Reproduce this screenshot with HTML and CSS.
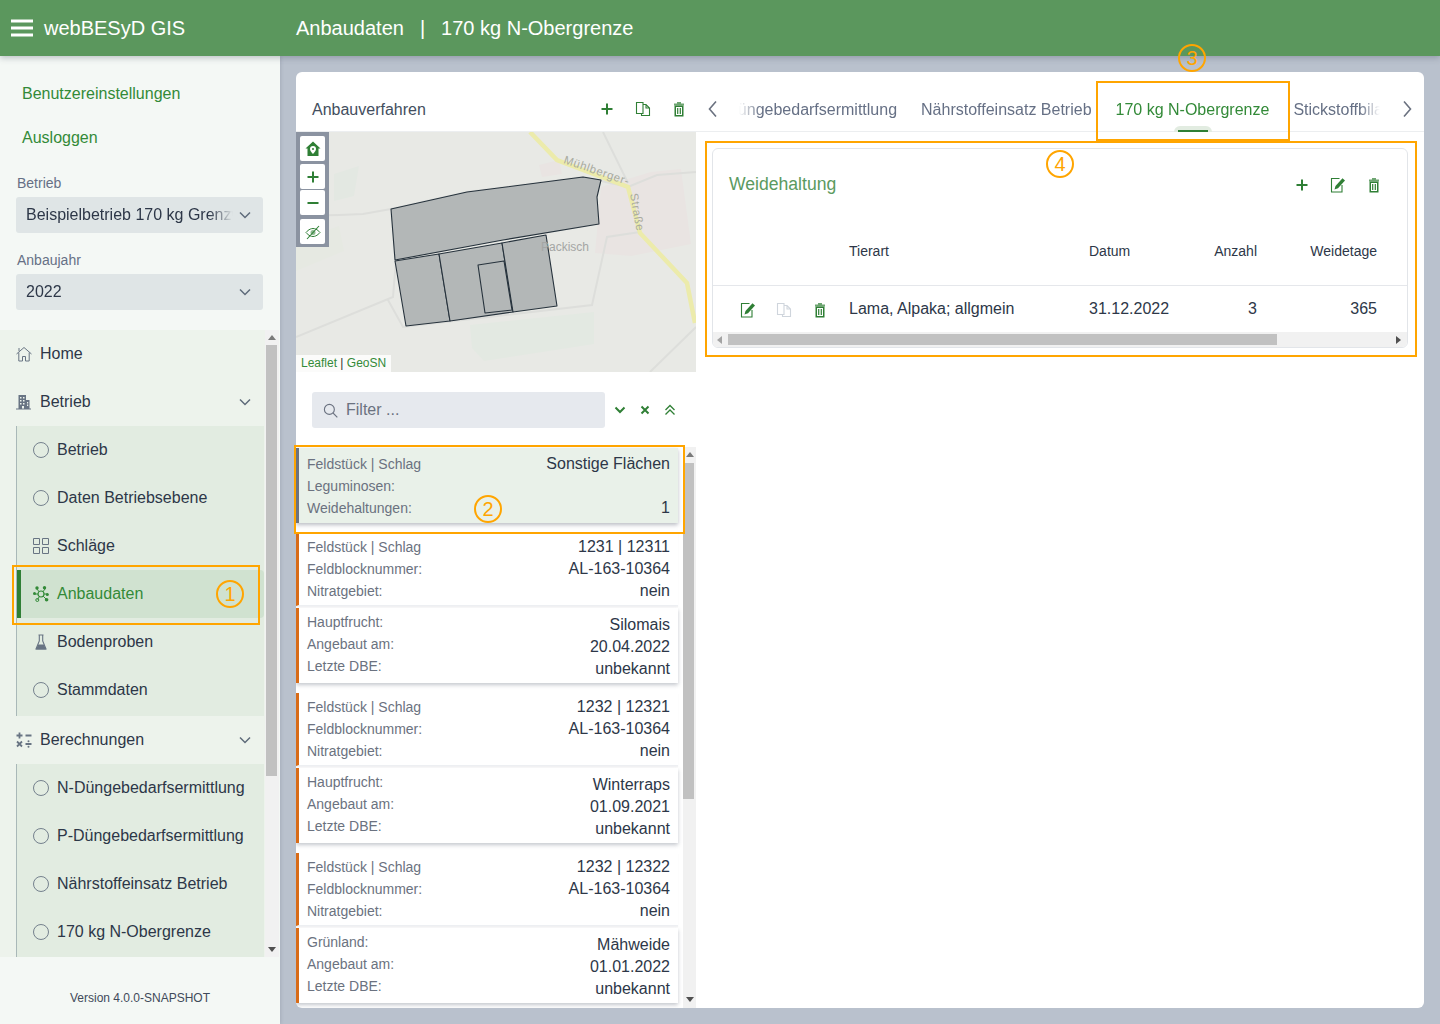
FILE: index.html
```html
<!DOCTYPE html>
<html lang="de">
<head>
<meta charset="utf-8">
<title>webBESyD GIS</title>
<link rel="stylesheet" href="styles.css">
</head>
<body>
<svg class="defs" width="0" height="0" aria-hidden="true">
  <symbol id="i-plus" viewBox="0 0 16 16"><path d="M8 2.500v11M2.500 8h11" fill="none" stroke="currentColor" stroke-width="2"/></symbol>
  <symbol id="i-copy" viewBox="0 0 16 16"><path d="M1.500 1.500h6.500v11h-6.500zM8 3.500h3l3.500 3.500v7.500h-8v-2M11 3.500V7h3.500" fill="none" stroke="currentColor" stroke-width="1.100"/></symbol>
  <symbol id="i-trash" viewBox="0 0 16 16"><path d="M6 1h4v1.500h3v2H3v-2h3z" fill="currentColor" opacity=".7"/><path d="M4.250 5.250h7.500v9.500h-7.500z" fill="none" stroke="currentColor" stroke-width="1.500"/><path d="M6.700 7v6M9.300 7v6" stroke="currentColor" stroke-width="1.200"/></symbol>
  <symbol id="i-edit" viewBox="0 0 16 16"><path d="M9.500 1.500H1.500v13.500h10.500V8" fill="none" stroke="currentColor" stroke-width="1.100"/><path d="M4.500 12.500l1-3.500 7-7.700 2.500 2.200-7 7.700z" fill="currentColor"/></symbol>
  <symbol id="i-chev" viewBox="0 0 16 16"><path d="M3 5.500l5 5 5-5" fill="none" stroke="currentColor" stroke-width="1.500"/></symbol>
  <symbol id="i-circle" viewBox="0 0 16 16"><circle cx="8" cy="8" r="7.500" fill="none" stroke="currentColor" stroke-width=".9"/></symbol>
</svg>

<header class="topbar">
  <svg class="burger" width="22" height="18" viewBox="0 0 22 18"><path d="M0 2h22M0 9h22M0 16h22" stroke="#fff" stroke-width="3"/></svg>
  <span class="brand">webBESyD GIS</span>
  <span class="crumb">Anbaudaten</span>
  <span class="crumb-sep">|</span>
  <span class="crumb">170 kg N-Obergrenze</span>
</header>

<div class="shell">
  <aside class="sidebar">
    <div class="side-top">
      <a class="side-link">Benutzereinstellungen</a>
      <a class="side-link">Ausloggen</a>
      <label class="sel-label sel-label-first">Betrieb</label>
      <div class="select"><span class="select-text">Beispielbetrieb 170 kg Grenzwert</span><svg class="select-chev"><use href="#i-chev"/></svg></div>
      <label class="sel-label">Anbaujahr</label>
      <div class="select"><span class="select-text">2022</span><svg class="select-chev"><use href="#i-chev"/></svg></div>
    </div>
    <div class="nav-wrap">
      <nav class="nav">
        <div class="nav-item"><svg class="nav-ic" viewBox="0 0 16 16"><path d="M.5 8L8 1.500 15.500 8M2.800 6.500v8.500h3.700v-4.500h3V15h3.700V6.500M3 2v3" fill="none" stroke="currentColor" stroke-width="1"/></svg>Home</div>
        <div class="nav-item"><svg class="nav-ic" viewBox="0 0 16 16"><path fill-rule="evenodd" fill="currentColor" d="M2.500 1H10v5h3.500v8.500H15v1H0v-1h2.500zM4 3v1.500h1.500V3zM7 3v1.500h1.500V3zM4 6v1.500h1.500V6zM7 6v1.500h1.500V6zM4 9v1.500h1.500V9zM7 9v1.500h1.500V9zM11 8v1.500h1.200V8zM11 10.500V12h1.200v-1.500zM6 12v2.500h2V12z"/></svg>Betrieb<svg class="nav-chev"><use href="#i-chev"/></svg></div>
        <div class="sub">
          <div class="sub-item"><svg class="sub-ic"><use href="#i-circle"/></svg>Betrieb</div>
          <div class="sub-item"><svg class="sub-ic"><use href="#i-circle"/></svg>Daten Betriebsebene</div>
          <div class="sub-item"><svg class="sub-ic" viewBox="0 0 16 16"><path d="M.5.500h6v6h-6zM9.500.500h6v6h-6zM.5 9.500h6v6h-6zM9.500 9.500h6v6h-6z" fill="none" stroke="currentColor"/></svg>Schläge</div>
          <div class="sub-item sub-active"><svg class="sub-ic" viewBox="0 0 16 16"><path d="M8 8L3.500 2.500M8 8l4.500-5.500M8 8H2M8 8h6.500M8 8l-3.500 5.500M8 8l5 5" stroke="currentColor" stroke-width="1"/><circle cx="8" cy="8" r="3" fill="#d0e2d0" stroke="currentColor" stroke-width="1.200"/><circle cx="4" cy="2" r="1.700" fill="currentColor"/><circle cx="11.500" cy="1.800" r="1.700" fill="currentColor"/><circle cx="1.500" cy="7.500" r="1.500" fill="currentColor"/><circle cx="14.300" cy="8.500" r="1.500" fill="currentColor"/><circle cx="4.300" cy="14" r="1.500" fill="none" stroke="currentColor"/><circle cx="13.600" cy="13.800" r="1.800" fill="currentColor"/></svg>Anbaudaten</div>
          <div class="sub-item"><svg class="sub-ic" viewBox="0 0 16 16"><path d="M5.500 1h5M6.300 1v6L3 15h10L9.700 7V1" fill="none" stroke="currentColor" stroke-width="1.100"/><path d="M5 10.500h6L13 15.500H3z" fill="currentColor"/></svg>Bodenproben</div>
          <div class="sub-item"><svg class="sub-ic"><use href="#i-circle"/></svg>Stammdaten</div>
        </div>
        <div class="nav-item"><svg class="nav-ic" viewBox="0 0 16 16"><path d="M3.500.5v6M.5 3.500h6M9.500 3.500h6M1 9.500l5 5M6 9.500l-5 5M9.500 12h6" fill="none" stroke="currentColor" stroke-width="1.800"/><circle cx="12.500" cy="9.300" r="1" fill="currentColor"/><circle cx="12.500" cy="14.700" r="1" fill="currentColor"/></svg>Berechnungen<svg class="nav-chev"><use href="#i-chev"/></svg></div>
        <div class="sub sub-long">
          <div class="sub-item"><svg class="sub-ic"><use href="#i-circle"/></svg>N-Düngebedarfsermittlung</div>
          <div class="sub-item"><svg class="sub-ic"><use href="#i-circle"/></svg>P-Düngebedarfsermittlung</div>
          <div class="sub-item"><svg class="sub-ic"><use href="#i-circle"/></svg>Nährstoffeinsatz Betrieb</div>
          <div class="sub-item"><svg class="sub-ic"><use href="#i-circle"/></svg>170 kg N-Obergrenze</div>
        </div>
      </nav>
      <div class="vbar vbar-nav">
        <div class="arrow arrow-up"></div>
        <div class="vtrack"><div class="vthumb vthumb-nav"></div></div>
        <div class="arrow arrow-down"></div>
      </div>
    </div>
    <footer class="version">Version 4.0.0-SNAPSHOT</footer>
  </aside>

  <main class="content">
    <section class="card">
      <div class="left">
        <div class="left-head">
          <span class="left-title">Anbauverfahren</span>
          <div class="icon-group">
            <svg class="ic"><use href="#i-plus"/></svg>
            <svg class="ic"><use href="#i-copy"/></svg>
            <svg class="ic"><use href="#i-trash"/></svg>
          </div>
        </div>
        <div class="map">
          <svg class="map-svg" viewBox="0 0 400 240">
            <rect width="400" height="240" fill="#e8e9e5"/>
            <path d="M38 42l25-8-5 30-20 5z" fill="#e3e8e2"/>
            <path d="M243 33l20-5 3 14-20 3zM305 55l50-15 30-3 10 75-60 12-36-3z" fill="#e9e4e2"/>
            <path d="M174 193l124-13v32l-110 17-12-13z" fill="#e3e9e2"/>
            <path d="M0 110l43-16 5 25-48 20z" fill="#e6e9e2"/>
            <g fill="none" stroke="#dddedb" stroke-width="2">
              <path d="M0 84l43-1 24-1 28-5 76-17 116-15 45 10 29-12 39-3"/>
              <path d="M0 205l97-40 3-37M92 168l15 27 189-22 15-68 33-5"/>
              <path d="M307 0l25 51M354 240l46-45"/>
            </g>
            <path d="M234 0l27 28 71 27 12 46 47 50 8 40" fill="none" stroke="#ecebab" stroke-width="4.500"/>
            <g fill="#b3b7b7" stroke="#26323c" stroke-width="1.100" stroke-linejoin="round">
              <path d="M95 77l76-17 116-15 18 3-4 17 2 27-96 16-108 20z"/>
              <path d="M99 129l44-7 11 67-44 5z"/>
              <path d="M143 122l63-11 11 69-63 9z"/>
              <path d="M206 111l44-8 11 71-44 6z"/>
              <path d="M182 133l26-4 8 49-27 3z"/>
            </g>
            <text class="map-road" transform="translate(267 31) rotate(19)">Mühlberger-</text>
            <text class="map-road" transform="translate(334 62) rotate(80)">Straße</text>
            <text class="map-place" x="245" y="119">Packisch</text>
          </svg>
          <div class="map-ctrl">
            <div class="map-btn"><svg class="map-ic" viewBox="0 0 16 16"><path fill-rule="evenodd" fill="currentColor" d="M8 .5l7.500 7H13.500v7.500h-11V7.500H.5zM8 5a3 3 0 0 0-3 3c0 2 3 5 3 5s3-3 3-5a3 3 0 0 0-3-3zm0 2a1 1 0 1 1 0 2 1 1 0 0 1 0-2z"/></svg></div>
            <div class="map-btn map-btn-gap"><svg class="map-ic"><use href="#i-plus"/></svg></div>
            <div class="map-btn"><svg class="map-ic" viewBox="0 0 16 16"><path d="M2.500 8h11" stroke="currentColor" stroke-width="2"/></svg></div>
            <div class="map-btn map-btn-last"><svg class="map-ic" viewBox="0 0 16 16"><path d="M1 8.500s3-4 7-4 7 4 7 4-3 4-7 4-7-4-7-4z" fill="none" stroke="currentColor" stroke-width="1"/><circle cx="8" cy="8.500" r="2.500" fill="currentColor" opacity=".55"/><path d="M2 15L14 2" stroke="currentColor" stroke-width="1.100"/></svg></div>
          </div>
          <div class="map-attr"><span class="attr-link">Leaflet</span> | <span class="attr-link">GeoSN</span></div>
        </div>
        <div class="filter">
          <div class="filter-input">
            <svg class="search-ic" viewBox="0 0 16 16"><circle cx="6.800" cy="6.800" r="5.300" fill="none" stroke="currentColor" stroke-width="1.200"/><path d="M10.800 10.800l4.500 4.500" stroke="currentColor" stroke-width="1.300"/></svg>
            <span>Filter ...</span>
          </div>
          <svg class="fic" viewBox="0 0 12 12"><path d="M1.500 3.500L6 8l4.500-4.500" fill="none" stroke="currentColor" stroke-width="2"/></svg>
          <svg class="fic" viewBox="0 0 12 12"><path d="M2.500 2.500l7 7M9.500 2.500l-7 7" stroke="currentColor" stroke-width="2"/></svg>
          <svg class="fic" viewBox="0 0 12 12"><path d="M1.500 6L6 1.500 10.500 6M1.500 10.500L6 6l4.500 4.500" fill="none" stroke="currentColor" stroke-width="1.300"/></svg>
        </div>
        <div class="list-wrap">
          <div class="list">
            <div class="block block-selected">
              <div class="row"><span class="lab">Feldstück | Schlag</span><span class="val">Sonstige Flächen</span></div>
              <div class="row"><span class="lab">Leguminosen:</span></div>
              <div class="row"><span class="lab">Weidehaltungen:</span><span class="val">1</span></div>
            </div>
            <div class="group">
              <div class="block block-top">
                <div class="row"><span class="lab">Feldstück | Schlag</span><span class="val">1231 | 12311</span></div>
                <div class="row"><span class="lab">Feldblocknummer:</span><span class="val">AL-163-10364</span></div>
                <div class="row"><span class="lab">Nitratgebiet:</span><span class="val">nein</span></div>
              </div>
              <div class="block block-bottom">
                <div class="row"><span class="lab">Hauptfrucht:</span><span class="val">Silomais</span></div>
                <div class="row"><span class="lab">Angebaut am:</span><span class="val">20.04.2022</span></div>
                <div class="row"><span class="lab">Letzte DBE:</span><span class="val">unbekannt</span></div>
              </div>
            </div>
            <div class="group">
              <div class="block block-top">
                <div class="row"><span class="lab">Feldstück | Schlag</span><span class="val">1232 | 12321</span></div>
                <div class="row"><span class="lab">Feldblocknummer:</span><span class="val">AL-163-10364</span></div>
                <div class="row"><span class="lab">Nitratgebiet:</span><span class="val">nein</span></div>
              </div>
              <div class="block block-bottom">
                <div class="row"><span class="lab">Hauptfrucht:</span><span class="val">Winterraps</span></div>
                <div class="row"><span class="lab">Angebaut am:</span><span class="val">01.09.2021</span></div>
                <div class="row"><span class="lab">Letzte DBE:</span><span class="val">unbekannt</span></div>
              </div>
            </div>
            <div class="group">
              <div class="block block-top">
                <div class="row"><span class="lab">Feldstück | Schlag</span><span class="val">1232 | 12322</span></div>
                <div class="row"><span class="lab">Feldblocknummer:</span><span class="val">AL-163-10364</span></div>
                <div class="row"><span class="lab">Nitratgebiet:</span><span class="val">nein</span></div>
              </div>
              <div class="block block-bottom">
                <div class="row"><span class="lab">Grünland:</span><span class="val">Mähweide</span></div>
                <div class="row"><span class="lab">Angebaut am:</span><span class="val">01.01.2022</span></div>
                <div class="row"><span class="lab">Letzte DBE:</span><span class="val">unbekannt</span></div>
              </div>
            </div>
          </div>
          <div class="vbar vbar-list">
            <div class="arrow arrow-up"></div>
            <div class="vtrack"><div class="vthumb vthumb-list"></div></div>
            <div class="arrow arrow-down"></div>
          </div>
        </div>
      </div>

      <div class="right">
        <div class="tabs">
          <svg class="tab-arrow" viewBox="0 0 16 16"><path d="M11 .5L4.500 8l6.500 7.500" fill="none" stroke="currentColor" stroke-width="1.600"/></svg>
          <div class="tab-view">
            <div class="tab-strip">
              <span class="tab">N-Düngebedarfsermittlung</span>
              <span class="tab">Nährstoffeinsatz Betrieb</span>
              <span class="tab tab-active">170 kg N-Obergrenze</span>
              <span class="tab">Stickstoffbilanz</span>
            </div>
          </div>
          <svg class="tab-arrow" viewBox="0 0 16 16"><path d="M5 .5L11.500 8 5 15.500" fill="none" stroke="currentColor" stroke-width="1.600"/></svg>
        </div>
        <div class="right-body">
          <div class="panel">
            <div class="panel-head">
              <span class="panel-title">Weidehaltung</span>
              <div class="icon-group">
                <svg class="ic"><use href="#i-plus"/></svg>
                <svg class="ic"><use href="#i-edit"/></svg>
                <svg class="ic"><use href="#i-trash"/></svg>
              </div>
            </div>
            <div class="table-wrap">
              <table class="table">
                <colgroup><col class="c-act"><col class="c-art"><col class="c-dat"><col class="c-anz"><col class="c-wei"><col class="c-rest"></colgroup>
                <thead><tr><th></th><th>Tierart</th><th>Datum</th><th class="num">Anzahl</th><th class="num">Weidetage</th><th></th></tr></thead>
                <tbody><tr>
                  <td class="acts"><svg class="ic"><use href="#i-edit"/></svg><svg class="ic ic-off"><use href="#i-copy"/></svg><svg class="ic"><use href="#i-trash"/></svg></td>
                  <td>Lama, Alpaka; allgmein</td><td>31.12.2022</td><td class="num">3</td><td class="num">365</td><td></td>
                </tr></tbody>
              </table>
            </div>
            <div class="hbar">
              <div class="arrow arrow-left"></div>
              <div class="hthumb"></div>
              <div class="arrow arrow-right"></div>
            </div>
          </div>
        </div>
      </div>
    </section>
  </main>
</div>

<div class="mark mark-1"></div><div class="badge badge-1">1</div>
<div class="mark mark-2"></div><div class="badge badge-2">2</div>
<div class="mark mark-3"></div><div class="badge badge-3">3</div>
<div class="mark mark-4"></div><div class="badge badge-4">4</div>
</body>
</html>
```
FILE: styles.css
```css
* { box-sizing: border-box; }
html, body { margin: 0; height: 100%; }
body {
  width: 1440px; height: 1024px; overflow: hidden; position: relative;
  font-family: "Liberation Sans", Arial, sans-serif; font-size: 16px; color: #2d3748;
  background: #b9c1cd;
  display: flex; flex-direction: column;
}
.defs { position: absolute; }

.topbar {
  height: 56px; flex: none; background: #5b975d; color: #fff; position: relative; z-index: 5;
  display: flex; align-items: center; padding-left: 11px;
  box-shadow: 0 2px 6px rgba(60,70,90,.3);
}
.burger { margin-right: 11px; }
.brand { font-size: 20px; width: 252px; }
.crumb { font-size: 20px; }
.crumb-sep { font-size: 20px; margin: 0 16px; }

.shell { flex: 1; display: flex; min-height: 0; }
.sidebar { width: 280px; flex: none; background: #f4f8f5; display: flex; flex-direction: column; min-height: 0; box-shadow: 1px 0 3px rgba(60,70,90,.15); }
.side-top { padding: 16px 17px 20px 16px; flex: none; height: 274px; }
.side-link { display: block; height: 44px; line-height: 44px; padding-left: 6px; color: #338a38; }
.sel-label { display: block; font-size: 14px; color: #667085; height: 16px; line-height: 16px; margin: 19px 0 6px 1px; }
.sel-label-first { margin-top: 15px; }
.select { height: 36px; background: #dfe5e6; border-radius: 3px; display: flex; align-items: center; padding: 0 10px; }
.select-text { flex: 1; white-space: nowrap; overflow: hidden; min-width: 0; -webkit-mask-image: linear-gradient(to left, transparent 0, #000 24px); mask-image: linear-gradient(to left, transparent 0, #000 24px); }
.select-chev { width: 16px; height: 16px; margin-left: 4px; color: #5f6b7a; flex: none; }

.nav-wrap { flex: 1; min-height: 0; display: flex; background: #edf3ec; margin-right: 1px; }
.nav { flex: 1; min-width: 0; overflow: hidden; }
.nav-item { height: 48px; display: flex; align-items: center; padding-left: 16px; position: relative; }
.nav-ic { width: 16px; height: 16px; margin-right: 8px; color: #687483; flex: none; }
.nav-chev { width: 16px; height: 16px; position: absolute; left: 237px; top: 16px; color: #5f6b7a; }
.sub { margin-left: 16px; width: 248px; border-left: 1px solid #a9b8b8; background: #e2ece1; padding-bottom: 2px; }
.sub-long { padding-bottom: 60px; }
.sub-item { height: 48px; display: flex; align-items: center; padding-left: 16px; border-radius: 0 4px 4px 0; }
.sub-ic { width: 16px; height: 16px; margin-right: 8px; color: #687483; flex: none; }
.sub-active { background: #d0e2d0; color: #338a38; border-left: 4px solid #2f7f35; padding-left: 12px; }
.sub-active .sub-ic { color: #338a38; }

.vbar { flex: none; width: 14px; background: #f1f1f1; display: flex; flex-direction: column; }
.vbar-list { width: 13px; }
.vtrack { flex: 1; min-height: 0; }
.vthumb { width: 11px; margin-left: 1px; background: #c1c1c1; }
.vbar-list .vthumb { margin-left: 0; }
.vthumb-nav { height: 431px; }
.vthumb-list { height: 336px; }
.arrow { width: 0; height: 0; flex: none; border: 4px solid transparent; }
.vbar .arrow { align-self: center; margin: 5px 0 6px; }
.vbar-nav .arrow { margin-bottom: 5px; }
.arrow-up { border-top-width: 0; border-bottom: 5px solid #7a7a7a; }
.arrow-down { border-bottom-width: 0; border-top: 5px solid #505050; }
.arrow-left { border-left-width: 0; border-right: 5px solid #a3a3a3; }
.arrow-right { border-right-width: 0; border-left: 5px solid #505050; }

.version { height: 67px; flex: none; font-size: 12px; text-align: center; padding-top: 34px; color: #3f4a5a; }

.content { flex: 1; min-width: 0; padding: 16px; }
.card { height: 936px; background: #fff; border-radius: 6px; display: flex; overflow: hidden; }
.left { width: 400px; flex: none; display: flex; flex-direction: column; min-height: 0; }
.left-head { height: 60px; flex: none; padding: 15px 9px 0 16px; display: flex; align-items: center; justify-content: space-between; border-bottom: 1px solid #eceef0; }
.left-title { color: #434e5e; padding-top: 1px; }
.icon-group { display: flex; gap: 20px; }
.ic { width: 16px; height: 16px; color: #2f7f35; display: block; }
.ic-off { color: #cfd5dc; }

.map { height: 240px; flex: none; position: relative; overflow: hidden; }
.map-svg { display: block; width: 400px; height: 240px; }
.map-road { font: 11.500px "Liberation Sans", Arial, sans-serif; fill: #a9ab9f; letter-spacing: .6px; }
.map-place { font: 12px "Liberation Sans", Arial, sans-serif; fill: #a4a6a4; }
.map-ctrl { position: absolute; left: 0; top: 0; width: 33px; height: 115px; background: #8b93a1; padding: 4px 0 0 4px; }
.map-btn { width: 25px; height: 25px; background: #fff; border-radius: 2px; display: flex; align-items: center; justify-content: center; color: #2f7f35; }
.map-btn-gap { margin-top: 3px; margin-bottom: 1px; }
.map-btn-last { margin-top: 4px; }
.map-ic { width: 16px; height: 16px; }
.map-attr { position: absolute; left: 0; bottom: 0; height: 17px; padding: 0 5px; background: rgba(255,255,255,.8); font-size: 12px; line-height: 17px; color: #333; }
.attr-link { color: #338a38; }

.filter { height: 75px; flex: none; padding: 20px 0 0 16px; display: flex; align-items: flex-start; }
.filter-input { width: 293px; height: 36px; background: #e6e9ee; border-radius: 3px; display: flex; align-items: center; padding-left: 11px; color: #6b7280; margin-right: 9px; }
.search-ic { width: 15px; height: 15px; margin-right: 8px; }
.fic { width: 12px; height: 12px; margin: 12px 13px 0 0; color: #2f7f35; }

.list-wrap { flex: 1; min-height: 0; display: flex; }
.list { width: 387px; flex: none; overflow: hidden; padding: 1px 5px 0 0; }
.block { background: #fff; border-left: 3px solid #d86b17; padding: 4px 8px 0 8px; }
.row { height: 22px; display: flex; align-items: center; justify-content: space-between; }
.lab { font-size: 14px; color: #6b7280; }
.val { color: #2d3748; }
.block-selected { background: #e9f1e9; border-left-color: #6b7280; height: 75px; padding-top: 5px; box-shadow: 0 2px 4px rgba(60,70,90,.35); margin-bottom: 10px; }
.block-top { height: 73px; padding-top: 3px; border-bottom: 1px solid #eef0f3; box-shadow: 0 1px 1px rgba(60,70,90,.06); }
.block-bottom { height: 75px; margin-top: 2px; padding-top: 5px; box-shadow: 0 2px 4px rgba(60,70,90,.3); }
.block-bottom .lab { position: relative; top: -2px; }
.block-bottom .val { position: relative; top: 1px; }
.group { margin-bottom: 10px; }

.right { flex: 1; min-width: 0; display: flex; flex-direction: column; }
.tabs { height: 60px; flex: none; border-bottom: 1px solid #eceef0; display: flex; align-items: flex-start; padding: 29px 9px 0 9px; color: #6b7280; }
.tab-arrow { width: 16px; height: 16px; flex: none; }
.tab-view { width: 645px; margin: -12px 19px 0 14px; flex: none; height: 43px; overflow: hidden; -webkit-mask-image: linear-gradient(to right, transparent 4px, #000 26px, #000 625px, transparent 645px); mask-image: linear-gradient(to right, transparent 4px, #000 26px, #000 625px, transparent 645px); }
.tab-strip { display: flex; gap: 24px; margin-left: -25.600px; width: 1000px; height: 43px; }
.tab { white-space: nowrap; flex: none; padding-top: 12px; color: #667085; position: relative; }
.tab-active { color: #338a38; }
.tab-active::before { content: ""; position: absolute; left: 58px; top: 37px; width: 38px; height: 6px; border-radius: 6px 6px 0 0; background: #e2ece1; }
.tab-active::after { content: ""; position: absolute; left: 62px; top: 41px; width: 30px; height: 2px; background: #2f7f35; }

.right-body { padding: 16px; }
.panel { height: 200px; border: 1px solid #e2e5e9; border-radius: 6px; overflow: hidden; display: flex; flex-direction: column; }
.panel-head { height: 71px; flex: none; display: flex; align-items: center; justify-content: space-between; padding: 0 25px 0 16px; }
.panel-title { font-size: 17.600px; color: #5b9a60; }
.table-wrap { overflow: hidden; flex: 1; min-height: 0; }
.table { border-collapse: collapse; table-layout: fixed; width: 839px; }
.c-act { width: 124px; } .c-art { width: 240px; } .c-dat { width: 112px; } .c-anz { width: 80px; } .c-wei { width: 120px; } .c-rest { width: 163px; }
th { height: 65px; font-size: 14px; font-weight: 400; text-align: left; padding: 0 12px 2px; border-bottom: 1px solid #e5e7eb; }
td { height: 47px; padding: 0 12px; }
.num { text-align: right; }
.acts { padding: 0 0 0 27px; white-space: nowrap; }
.acts .ic { display: inline-block; margin-right: 20px; vertical-align: middle; }
.acts .ic:last-child { margin-right: 0; }
.hbar { height: 15px; flex: none; background: #f1f1f1; display: flex; align-items: center; }
.hbar .arrow-left { margin: 0 6px 0 4px; }
.hthumb { width: 549px; height: 11px; background: #c1c1c1; margin-right: auto; }
.hbar .arrow-right { margin: 0 6px 0 0; }

.mark { position: absolute; border: 2px solid #ffa500; z-index: 10; pointer-events: none; }
.mark-1 { left: 12px; top: 565px; width: 248px; height: 60px; }
.mark-2 { left: 294px; top: 445px; width: 391px; height: 89px; }
.mark-3 { left: 1096px; top: 81px; width: 194px; height: 60px; }
.mark-4 { left: 705px; top: 141px; width: 712px; height: 216px; }
.badge { position: absolute; width: 28px; height: 28px; border: 2px solid #ffa500; border-radius: 50%; color: #ffa500; font-size: 20px; line-height: 24px; text-align: center; z-index: 11; }
.badge-1 { left: 216px; top: 580px; }
.badge-2 { left: 474px; top: 495px; }
.badge-3 { left: 1178px; top: 44px; }
.badge-4 { left: 1046px; top: 150px; }
```
